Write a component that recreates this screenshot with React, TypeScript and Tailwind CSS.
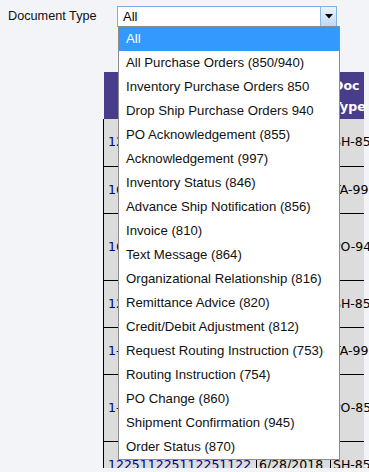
import React from "react";

type Row = {
  id: string;
  date: string;
  type: string;
  tall?: boolean;
};

const options = [
  "All",
  "All Purchase Orders (850/940)",
  "Inventory Purchase Orders 850",
  "Drop Ship Purchase Orders 940",
  "PO Acknowledgement (855)",
  "Acknowledgement (997)",
  "Inventory Status (846)",
  "Advance Ship Notification (856)",
  "Invoice (810)",
  "Text Message (864)",
  "Organizational Relationship (816)",
  "Remittance Advice (820)",
  "Credit/Debit Adjustment (812)",
  "Request Routing Instruction (753)",
  "Routing Instruction (754)",
  "PO Change (860)",
  "Shipment Confirmation (945)",
  "Order Status (870)",
];

const rows: Row[] = [
  { id: "1225112251", date: "6/29/2018", type: "SH-856" },
  { id: "1658823301", date: "6/29/2018", type: "TA-997" },
  { id: "1634410982", date: "6/29/2018", type: "PO-940", tall: true },
  { id: "1225112250", date: "6/28/2018", type: "SH-856" },
  { id: "1-44550912", date: "6/28/2018", type: "TA-997" },
  { id: "1-88901245", date: "6/28/2018", type: "PO-850", tall: true },
  { id: "122511225112251122", date: "6/28/2018", type: "SH-856" },
];

export default function App() {
  return (
    <div className="relative w-[369px] h-[472px] overflow-hidden bg-[#f3f4f8] font-['Liberation_Sans',Arial,sans-serif]">
      <div className="h-[468px] overflow-hidden">
        {/* filter row */}
        <div className="flex items-center h-[21px] mt-[6px]">
          <span className="w-[117px] shrink-0 pl-[8px] text-[12.7px] text-[#111]">Document Type</span>
          <div className="flex items-center w-[220px] h-[21px] border border-[#7fb0e0] bg-white">
            <span className="flex-1 pl-[5px] text-[13px] text-black">All</span>
            <div className="flex items-center justify-center w-[16px] h-[19px] border-l border-[#8fb6dc] bg-gradient-to-b from-[#eaf4fd] to-[#bcdaf4]">
              <svg width="8" height="5" viewBox="0 0 8 5">
                <path d="M0 0h8L4 4.5z" fill="#000" />
              </svg>
            </div>
          </div>
        </div>

        {/* results table */}
        <div className="ml-[103px] mt-[45px] w-[261px] font-['DejaVu_Sans',Verdana,sans-serif] text-[12.5px]">
          <div className="flex h-[47px] ml-[1px] bg-[#483d8b] text-white font-bold leading-[21px]">
            <div className="w-[152px] shrink-0 flex items-center justify-center">Doc Number</div>
            <div className="w-[74px] shrink-0 flex items-center justify-center">Date</div>
            <div className="flex-1 min-w-0 flex flex-col justify-center pl-[3px] whitespace-nowrap">
              <span>Doc</span>
              <span>Type</span>
            </div>
          </div>
          {rows.map((r, i) => (
            <div
              key={i}
              className={`flex bg-[#dcdcdc] border-l border-black ${i > 0 ? "border-t" : ""} ${
                r.tall ? "h-[67px]" : "h-[47px]"
              }`}
            >
              <div className="w-[152px] shrink-0 flex items-center pl-[4px] text-[#000080] whitespace-nowrap">{r.id}</div>
              <div className="w-[74px] shrink-0 flex items-center pl-[2px] border-l border-black whitespace-nowrap">{r.date}</div>
              <div className="flex-1 min-w-0 flex items-center pl-[2px] border-l border-black whitespace-nowrap text-black">
                {r.type}
              </div>
            </div>
          ))}
        </div>
      </div>

      {/* open dropdown list */}
      <div className="absolute left-[118px] top-[26px] w-[222px] border border-[#8c8c8c] bg-white">
        {options.map((o, i) => (
          <div
            key={o}
            className={`h-[24px] flex items-center pl-[7px] text-[13.2px] whitespace-nowrap ${
              i === 0 ? "bg-[#3399ff] text-white" : "text-[#111]"
            }`}
          >
            {o}
          </div>
        ))}
      </div>
    </div>
  );
}
